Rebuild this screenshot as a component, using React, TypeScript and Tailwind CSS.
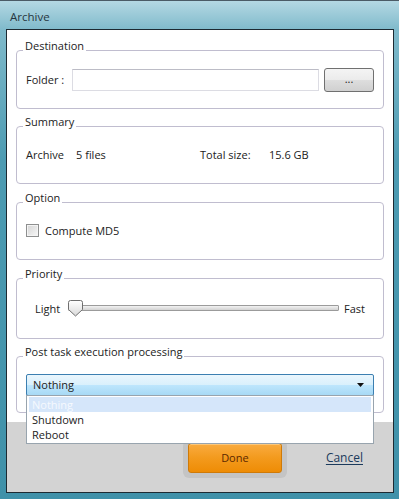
import { ReactNode } from 'react';

interface GroupProps {
  title: string;
  className: string;
  rowClassName?: string;
  children: ReactNode;
}

const Group = ({ title, className, rowClassName = 'pl-[9px] pr-[9px]', children }: GroupProps) => {
  return (
    <div className={`mx-[9px] flex shrink-0 flex-col rounded-[4px] border border-[#c0bdcf] ${className}`}>
      <div className="-mt-[12px] -mb-[2px] ml-[6px] w-fit bg-white px-[2px] leading-[14px]">{title}</div>
      <div className={`flex flex-1 items-center ${rowClassName}`}>{children}</div>
    </div>
  );
};

const SliderThumb = () => (
  <svg width="16" height="17" viewBox="0 0 16 17" className="absolute left-0 top-0">
    <defs>
      <linearGradient id="thumbFill" x1="0" y1="0" x2="0" y2="1">
        <stop offset="0" stopColor="#ffffff" />
        <stop offset="1" stopColor="#d9d9d9" />
      </linearGradient>
    </defs>
    <path
      d="M2.5 0.5h10a2 2 0 0 1 2 2v7l-7 6.5-7-6.5v-7a2 2 0 0 1 2-2z"
      fill="url(#thumbFill)"
      stroke="#6e6e6e"
    />
  </svg>
);

export default function App() {
  const options = ['Nothing', 'Shutdown', 'Reboot'];
  const selected = 'Nothing';

  return (
    <div className="flex h-[499px] w-[399px] flex-col bg-[linear-gradient(to_bottom,#b6d9e4_0px,#7fbacb_30px,#4d9bb2_160px,#3f91a9_100%)] font-['Open_Sans','Noto_Sans',sans-serif] text-[11px] text-[#222]">
      <div className="h-[29px] shrink-0 border-t border-[#4b5b66] pl-[10px] pt-[9px] text-[11.5px] leading-[14px] text-[#26363f]">
        Archive
      </div>

      <div className="mb-[6px] ml-[6px] mr-[5px] flex flex-1 flex-col border border-[#1d2a32] bg-white">
        <div className="flex flex-1 flex-col">
          <Group title="Destination" className="mt-[20px] h-[59px]">
            <span className="w-[46px] shrink-0 leading-[14px]">Folder :</span>
            <div className="h-[22px] flex-1 border border-[#dcdce3] border-t-[#bcbcc6] bg-white" />
            <button className="ml-[5px] h-[24px] w-[50px] shrink-0 rounded-[3px] border border-[#707070] bg-[linear-gradient(to_bottom,#f4f4f4_0%,#ebebeb_50%,#dedede_50%,#d0d0d0_100%)] pb-[2px] text-[11px] leading-[14px] text-[#222]">
              ...
            </button>
          </Group>

          <Group title="Summary" className="mt-[17px] h-[58px]">
            <span className="w-[50px] leading-[14px]">Archive</span>
            <span className="w-[124px] leading-[14px]">5 files</span>
            <span className="w-[69px] leading-[14px]">Total size:</span>
            <span className="leading-[14px]">15.6 GB</span>
          </Group>

          <Group title="Option" className="mt-[18px] h-[58px]">
            <div className="mb-[1px] h-[13px] w-[13px] shrink-0 border border-[#8e8f8f] bg-[linear-gradient(135deg,#d4d4d4,#f7f7f7)] shadow-[inset_0_0_0_1px_#f4f4f4]" />
            <span className="ml-[6px] leading-[14px]">Compute MD5</span>
          </Group>

          <Group title="Priority" className="mt-[18px] h-[61px]" rowClassName="pl-[18px] pr-[18px]">
            <span className="w-[33px] shrink-0 leading-[14px]">Light</span>
            <div className="relative flex h-[17px] flex-1 items-center pb-[1px]">
              <div className="h-[6px] w-full rounded-[1px] border border-[#9b9b9b] bg-[linear-gradient(to_bottom,#f2f2f2,#d2d2d2)]" />
              <SliderThumb />
            </div>
            <span className="ml-[5px] shrink-0 leading-[14px]">Fast</span>
          </Group>

          <Group title="Post task execution processing" className="mt-[17px] h-[57px]">
            <div className="relative h-[22px] flex-1">
              <div className="flex h-full items-center rounded-[2px] border border-[#3c7fb1] bg-[linear-gradient(to_bottom,#eaf6fd_0%,#d9f0fc_50%,#bee6fd_50%,#a7d9f5_100%)] pl-[6px] pr-[9px]">
                <span className="flex-1 leading-[14px]">{selected}</span>
                <svg width="7" height="4" viewBox="0 0 7 4">
                  <path d="M0 0h7L3.5 4z" fill="#111" />
                </svg>
              </div>
              <div className="absolute left-0 right-0 top-[21px] z-10 border border-[#98a4ae] bg-white px-[2px] py-[1px]">
                {options.map(option => (
                  <div
                    key={option}
                    className={`h-[15px] pl-[3px] leading-[15px] ${
                      option === selected ? 'bg-[#d5e6fa] text-[#f6f9fe]' : 'text-[#222]'
                    }`}
                  >
                    {option}
                  </div>
                ))}
              </div>
            </div>
          </Group>
        </div>

        <div className="flex h-[70px] shrink-0 items-start justify-end bg-[#d3d3d3] pr-[30px] pt-[18px]">
          <div className="rounded-[6px] bg-[#c4c4c4] px-[5px] pb-[5px] pt-[3px]">
            <button className="h-[30px] w-[94px] rounded-[3px] border border-[#cf7a08] bg-[linear-gradient(to_bottom,#f9ab40_0%,#f39a1d_50%,#ee8c05_100%)] text-[11px] leading-[14px] text-[#5c2800] shadow-[inset_0_1px_0_#fcc77a]">
              Done
            </button>
          </div>
          <a className="ml-[39px] mt-[10px] text-[12px] leading-[16px] text-[#1b3a5c] underline underline-offset-[2px]">
            Cancel
          </a>
        </div>
      </div>
    </div>
  );
}
